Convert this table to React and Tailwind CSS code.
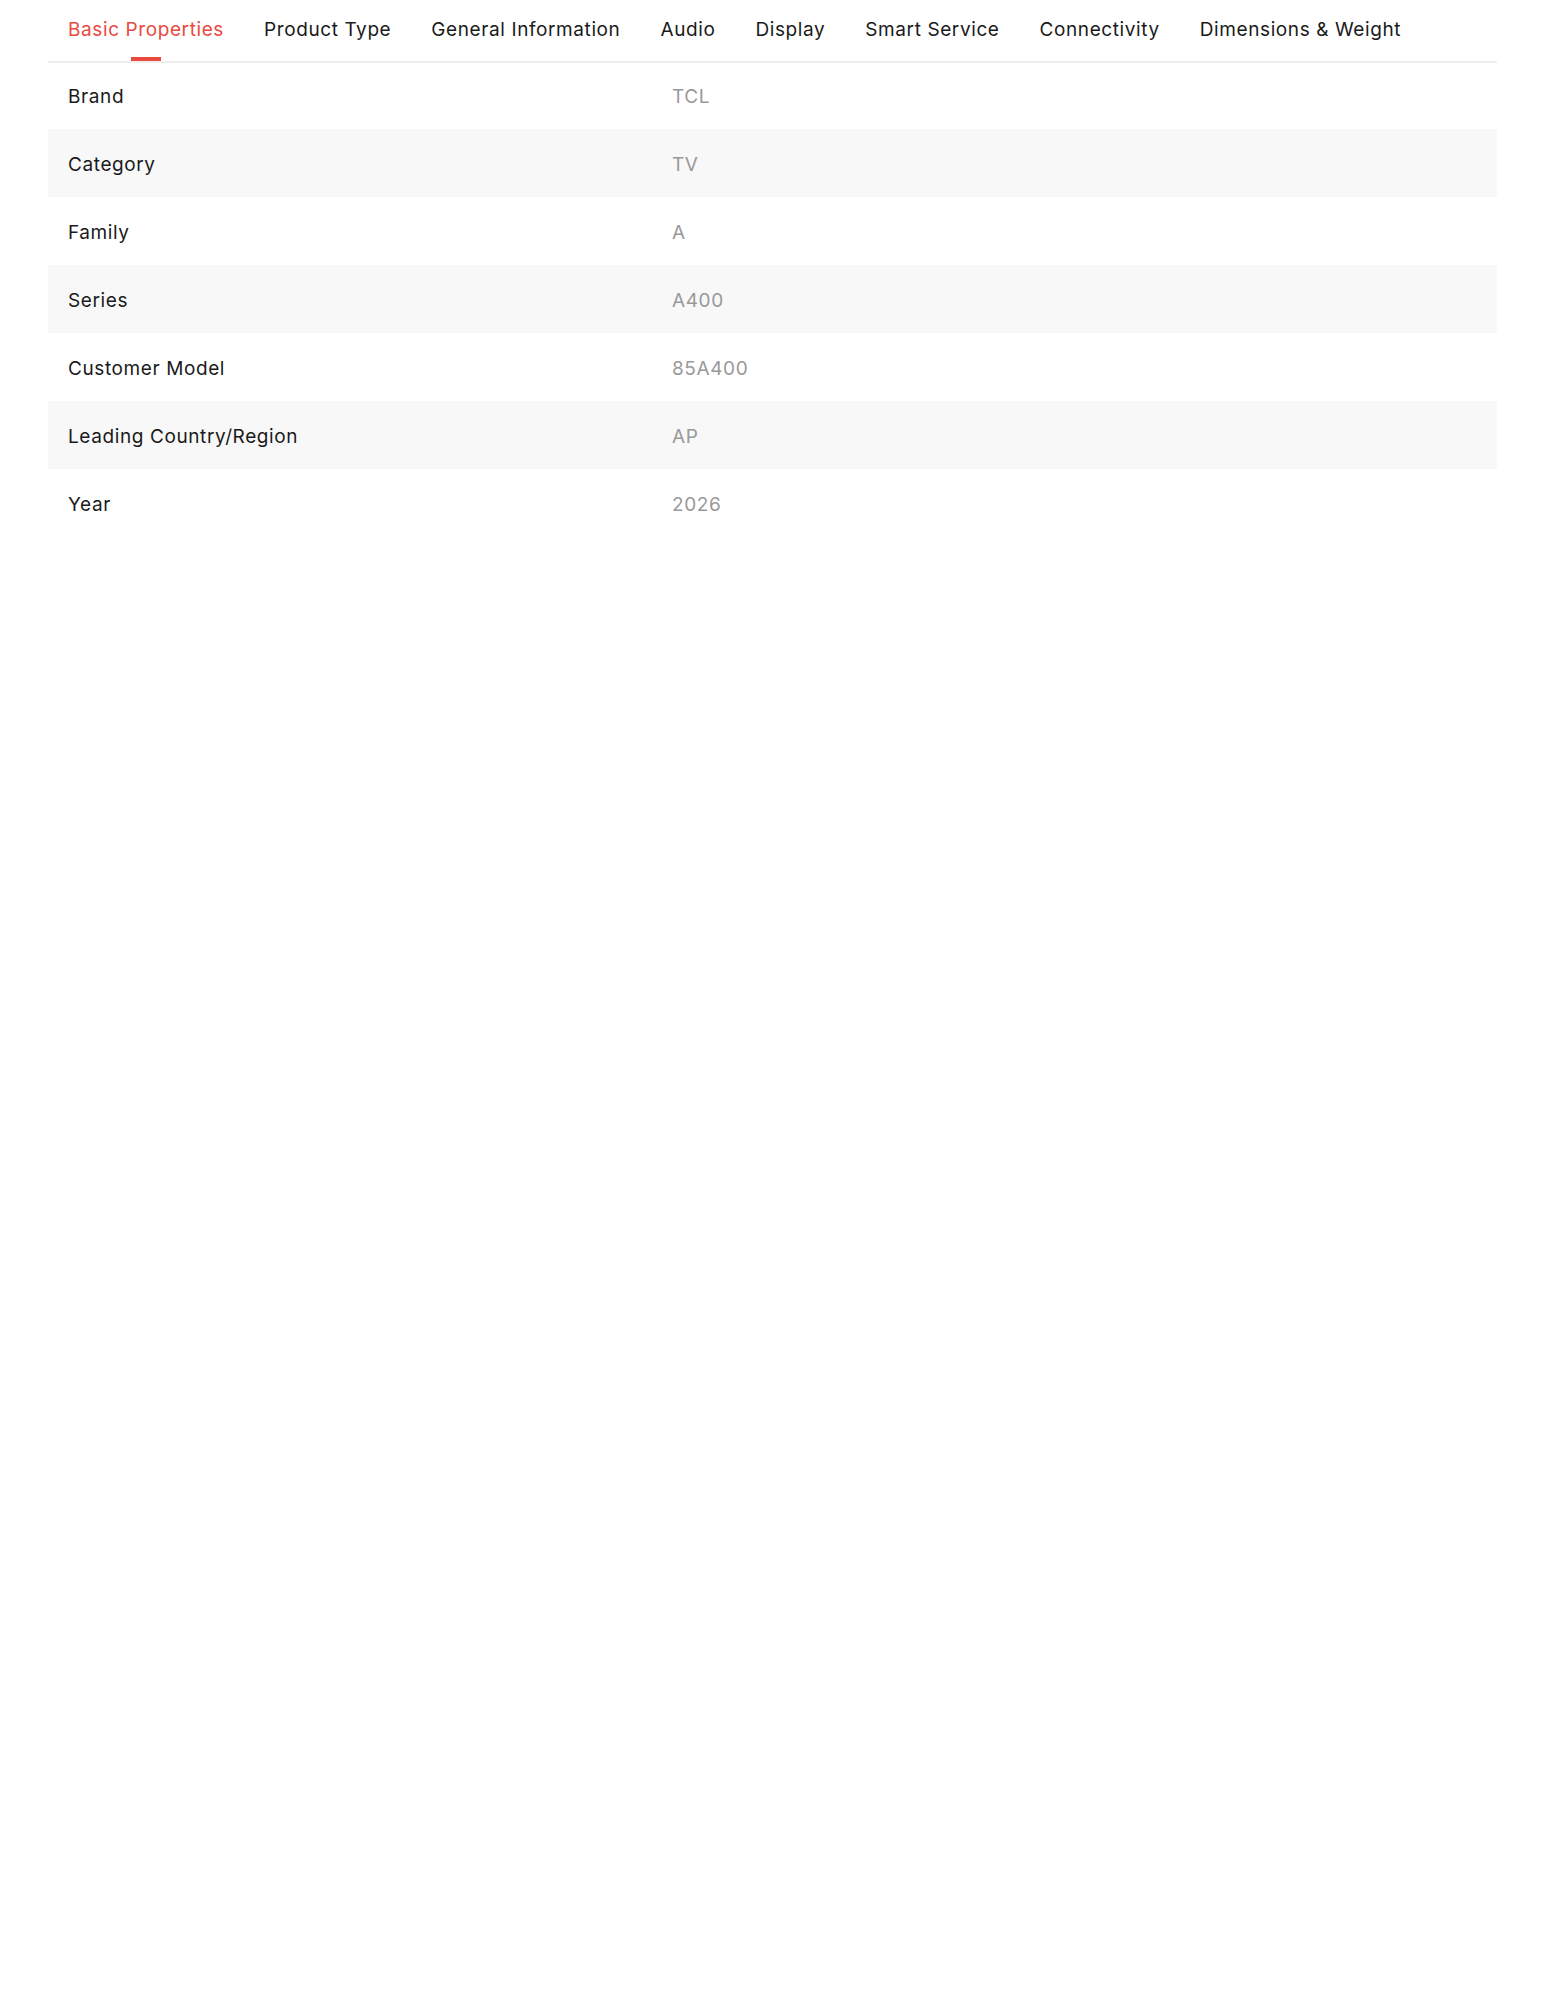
import { useState } from "react";

const tabs = [
  "Basic Properties",
  "Product Type",
  "General Information",
  "Audio",
  "Display",
  "Smart Service",
  "Connectivity",
  "Dimensions & Weight",
];

const specs = [
  ["Brand", "TCL"],
  ["Category", "TV"],
  ["Family", "A"],
  ["Series", "A400"],
  ["Customer Model", "85A400"],
  ["Leading Country/Region", "AP"],
  ["Year", "2026"],
];

export default function App() {
  const [active, setActive] = useState(0);

  return (
    <div className="min-h-screen bg-white px-12 font-['Inter',sans-serif] text-[19px] tracking-[0.6px]">
      {/* tab bar */}
      <div className="relative flex h-[63px] border-b-2 border-[#efefef]">
        {tabs.map((tab, i) => (
          <button
            key={tab}
            onClick={() => setActive(i)}
            className={`relative flex h-full items-center px-5 pb-[1px] whitespace-nowrap tracking-[0.6px] ${
              active === i ? "text-[#e84a3f]" : "text-[#1a1a1a]"
            }`}
          >
            {tab}
            {active === i && (
              <span className="absolute bottom-0 left-1/2 h-[4px] w-[30px] -translate-x-1/2 bg-[#e84a3f]" />
            )}
          </button>
        ))}
      </div>

      {/* spec rows */}
      <div className="-mt-[2px]">
        {specs.map(([label, value], i) => (
          <div
            key={label}
            className={`flex h-[68px] items-center pt-[5px] ${
              i % 2 === 1 ? "bg-[#f8f8f8]" : ""
            }`}
          >
            <div className="w-[624px] pl-5 text-[#1a1a1a]">{label}</div>
            <div className="text-[#999999]">{value}</div>
          </div>
        ))}
      </div>
    </div>
  );
}
